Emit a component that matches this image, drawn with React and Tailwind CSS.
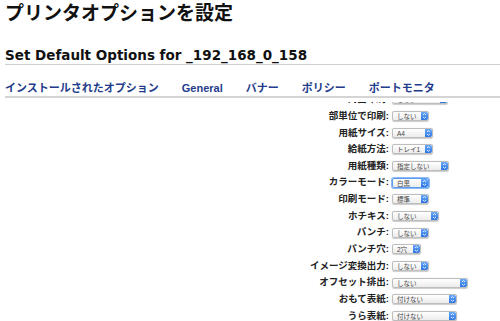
import React from "react";

const JP = "font-['Liberation_Sans','Noto_Sans_CJK_JP',sans-serif]";

const tabs = ["インストールされたオプション", "General", "バナー", "ポリシー", "ポートモニタ"];

const rows = [
  { label: "両面印刷", value: "しない", w: "w-[56px]" },
  { label: "部単位で印刷", value: "しない", w: "w-[37px]" },
  { label: "用紙サイズ", value: "A4", w: "w-[41px]" },
  { label: "給紙方法", value: "トレイ1", w: "w-[41px]" },
  { label: "用紙種類", value: "指定しない", w: "w-[57px]" },
  { label: "カラーモード", value: "白黒", w: "w-[37px]", focus: true },
  { label: "印刷モード", value: "標準", w: "w-[37px]" },
  { label: "ホチキス", value: "しない", w: "w-[47px]" },
  { label: "パンチ", value: "しない", w: "w-[37px]" },
  { label: "パンチ穴", value: "2穴", w: "w-[29px]" },
  { label: "イメージ変換出力", value: "しない", w: "w-[37px]" },
  { label: "オフセット排出", value: "しない", w: "w-[76px]" },
  { label: "おもて表紙", value: "付けない", w: "w-[65px]" },
  { label: "うら表紙", value: "付けない", w: "w-[65px]" },
];

function PopUp({ value, w, focus }) {
  return (
    <div
      className={`${w} h-[10px] flex items-stretch rounded-[2px] border bg-gradient-to-b from-white to-[#ececec] shadow-[0_0.5px_1px_rgba(0,0,0,0.2)] ${
        focus ? "border-[#5b9bf0] ring-1 ring-[#8fbaf5]" : "border-[#bdbdbd]"
      }`}
    >
      <span className="flex-1 pl-[4px] text-[6.5px] leading-[9px] text-[#444] truncate">{value}</span>
      <span className="w-[7px] rounded-r-[2px] bg-gradient-to-b from-[#6aa9f7] to-[#2c74e2] flex items-center justify-center">
        <svg width="5" height="8" viewBox="0 0 5 8" fill="none" stroke="white" strokeWidth="0.8">
          <path d="M1 3 L2.5 1.6 L4 3" />
          <path d="M1 5 L2.5 6.4 L4 5" />
        </svg>
      </span>
    </div>
  );
}

export default function App() {
  return (
    <div className={`w-[500px] h-[321px] overflow-hidden bg-white flex flex-col ${JP}`}>
      <h1 className="pl-[5px] text-[19px] leading-[28px] font-bold text-[#111]">プリンタオプションを設定</h1>

      <h2 className="mt-[18px] ml-[5px] font-['DejaVu_Sans',sans-serif] text-[13.5px] leading-[18px] font-bold text-[#111] border-b border-[#cfcfcf]">
        Set Default Options for _192_168_0_158
      </h2>

      {/* tabs */}
      <div className="mt-[16px] ml-[5px] flex gap-[23px] text-[11px] leading-[14px] font-bold text-[#1f3d8c] border-b-2 border-[#d4d4d4] pb-[1px]">
        {tabs.map((t) => (
          <span key={t}>{t}</span>
        ))}
      </div>

      {/* options list, scrolled */}
      <div className="mt-[4px] flex-1 overflow-hidden">
        <div className="-mt-[11px]">
          {rows.map((r) => (
            <div key={r.label} className="h-[16.67px] flex items-center">
              <span className="w-[389px] text-right text-[9.5px] font-bold text-[#222] whitespace-nowrap">
                {r.label}:
              </span>
              <span className="ml-[3px]">
                <PopUp value={r.value} w={r.w} focus={r.focus} />
              </span>
            </div>
          ))}
        </div>
      </div>
    </div>
  );
}
